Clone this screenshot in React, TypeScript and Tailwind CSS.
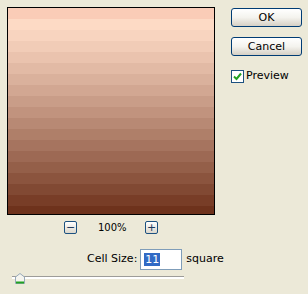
import React from 'react';

const top = [253, 218, 197];
const bottom = [110, 50, 28];
const bandCount = 19;

const bands = Array.from({ length: bandCount }, (_, i) => {
  if (i === 0) return 'rgb(250,204,183)';
  const t = Math.pow((i - 1) / (bandCount - 2), 1.15);
  const c = top.map((v, k) => Math.round(v + (bottom[k] - v) * t));
  return `rgb(${c[0]},${c[1]},${c[2]})`;
});

const XpButton = ({ label }: { label: string }) => (
  <button className="w-[71px] h-[19px] rounded-[3px] border border-[#003c74] bg-gradient-to-b from-white via-[#f4f3ee] to-[#d6d0c5] text-[11px] leading-none text-black">
    {label}
  </button>
);

const ZoomButton = ({ sign }: { sign: string }) => (
  <div className="w-[13px] h-[13px] rounded-[2px] border border-[#1c5180] bg-gradient-to-b from-white to-[#dcd8cc] flex items-center justify-center text-[11px] leading-none text-[#1c3c60]">
    {sign}
  </div>
);

export default function App() {
  return (
    <div
      className="w-[308px] h-[294px] bg-[#ece9d8] text-black overflow-hidden"
      style={{ fontFamily: '"DejaVu Sans", "Liberation Sans", sans-serif' }}
    >
      <div className="flex pt-[7px] pl-[7px]">
        <div className="flex flex-col">
          <div className="w-[208px] h-[208px] border border-black overflow-hidden flex flex-col">
            {bands.map((c, i) => (
              <div key={i} className="h-[11px] shrink-0" style={{ backgroundColor: c }} />
            ))}
          </div>
          <div className="flex items-center mt-[5px] ml-[57px]">
            <ZoomButton sign="−" />
            <span className="ml-[21px] w-[24px] text-[10px] text-center">100%</span>
            <span className="ml-[23px]">
              <ZoomButton sign="+" />
            </span>
          </div>
        </div>
        <div className="flex flex-col ml-[16px] mt-[1px]">
          <XpButton label="OK" />
          <div className="h-[10px]" />
          <XpButton label="Cancel" />
          <label className="flex items-center mt-[12px] text-[11px]">
            <span className="w-[13px] h-[13px] border border-[#1c5180] bg-white flex items-center justify-center">
              <svg width="9" height="9" viewBox="0 0 9 9">
                <path d="M1 4.5 L3.5 7 L8 1.5" stroke="#21a121" strokeWidth="2" fill="none" />
              </svg>
            </span>
            <span className="ml-[2px]">Preview</span>
          </label>
        </div>
      </div>
      <div className="flex items-center mt-[14px] ml-[87px] text-[11px]">
        <span>Cell Size:</span>
        <div className="ml-[3px] w-[42px] h-[21px] border border-[#7f9db9] bg-white flex items-center px-[3px]">
          <span className="bg-[#316ac5] text-white px-[1px] leading-[13px]">11</span>
        </div>
        <span className="ml-[4px]">square</span>
      </div>
      <div className="relative ml-[12px] mt-[5px] w-[172px] h-[12px]">
        <div className="mt-[6px] h-[1px] bg-[#9d9c99]" />
        <div className="h-[2px] bg-white" />
        <div className="absolute left-[3px] top-[-3px] w-[10px] h-[11px]">
          <svg width="10" height="11" viewBox="0 0 10 11">
            <path d="M0.5 4 L5 0.5 L9.5 4 L9.5 10.5 L0.5 10.5 Z" fill="#f5f4ee" stroke="#97a9b9" />
            <rect x="1" y="8.5" width="8" height="2" fill="#21a121" />
          </svg>
        </div>
      </div>
    </div>
  );
}
